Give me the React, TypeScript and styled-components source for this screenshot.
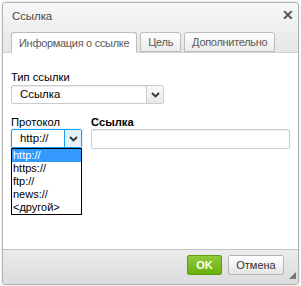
import React from "react";
import styled, { createGlobalStyle } from "styled-components";

const GlobalStyle = createGlobalStyle`
  html, body {
    margin: 0;
    padding: 0;
    background: #ffffff;
    font-family: "Liberation Sans", Arial, sans-serif;
    font-size: 11.2px;
    color: #333;
  }
`;

const Dialog = styled.div`
  position: relative;
  box-sizing: border-box;
  margin: 2px;
  width: 297px;
  height: 283px;
  border: 1px solid #b2b2b2;
  border-radius: 3px;
  background: linear-gradient(#f8f8f8, #e4e4e4 52px);
  box-shadow: 0 0 3px rgba(0, 0, 0, 0.15);
  display: flex;
  flex-direction: column;
  overflow: hidden;
`;

const TitleBar = styled.div`
  height: 25px;
  display: flex;
  align-items: center;
  justify-content: space-between;
  padding: 0 4px 0 9px;
  font-size: 11.5px;
  letter-spacing: -0.1px;
  color: #474747;
  text-shadow: 0 1px 0 rgba(255, 255, 255, 0.75);
`;

const Close = styled.span`
  font-size: 14px;
  font-weight: bold;
  color: #555;
  line-height: 1;
  margin-top: -2px;
`;

const TabStrip = styled.div`
  display: flex;
  align-items: flex-end;
  gap: 3px;
  padding-left: 8px;
  height: 24px;
  border-bottom: 1px solid #d1d1d1;
`;

const Tab = styled.div<{ $active?: boolean }>`
  box-sizing: border-box;
  flex: none;
  white-space: nowrap;
  height: ${p => (p.$active ? "21px" : "20px")};
  margin-bottom: ${p => (p.$active ? "-1px" : "0")};
  padding: 0 7px;
  display: flex;
  align-items: center;
  border: 1px solid #bcbcbc;
  border-bottom-color: ${p => (p.$active ? "#fff" : "#bcbcbc")};
  border-radius: 3px 3px 0 0;
  background: ${p => (p.$active ? "#fff" : "linear-gradient(#fefefe, #ebebeb)")};
  color: #595959;
  font-size: 11px;
  letter-spacing: -0.3px;
`;

const Content = styled.div`
  flex: 1;
  background: #fff;
  padding: 17px 7px 0 8px;
  position: relative;
`;

const Label = styled.div<{ $bold?: boolean }>`
  line-height: 14px;
  margin-bottom: 1px;
  color: #000;
  font-weight: ${p => (p.$bold ? "bold" : "normal")};
`;

const Row = styled.div`
  display: flex;
  gap: 9px;
  margin-top: 11px;
  ${Label} {
    margin-bottom: 0;
  }
`;

const Field = styled.div<{ $grow?: boolean }>`
  position: relative;
  flex: ${p => (p.$grow ? "1" : "none")};
`;

const Select = styled.div<{ $w: number; $focus?: boolean }>`
  box-sizing: border-box;
  width: ${p => p.$w}px;
  height: 19px;
  display: flex;
  border: 1px solid ${p => (p.$focus ? "#139ff7" : "#c9cccf")};
  border-radius: 2px;
  background: #fff;
  box-shadow: ${p => (p.$focus ? "0 0 2px #a8d5f7" : "inset 0 1px 1px rgba(0,0,0,0.08)")};
`;

const SelectText = styled.div`
  flex: 1;
  padding-left: 8px;
  line-height: 17px;
  color: #000;
  font-size: 11.4px;
`;

const Arrow = styled.div<{ $focus?: boolean }>`
  width: 16px;
  display: flex;
  align-items: center;
  justify-content: center;
  border-left: 1px solid ${p => (p.$focus ? "#139ff7" : "#c9cccf")};
  background: ${p => (p.$focus ? "#e4f1fb" : "linear-gradient(#fafafa, #e8e8e8)")};
`;

const Input = styled.div`
  box-sizing: border-box;
  height: 20px;
  margin-right: 1px;
  border: 1px solid #c9cccf;
  border-radius: 2px;
  box-shadow: inset 0 1px 1px rgba(0, 0, 0, 0.08);
`;

const List = styled.div`
  position: absolute;
  left: 0;
  top: 33px;
  box-sizing: border-box;
  width: 71px;
  border: 1px solid #000;
  background: #fff;
  z-index: 2;
`;

const Option = styled.div<{ $sel?: boolean }>`
  height: 13px;
  line-height: 13px;
  font-size: 11px;
  padding-left: 1px;
  color: ${p => (p.$sel ? "#fff" : "#000")};
  background: ${p => (p.$sel ? "#3399ff" : "transparent")};
`;

const Footer = styled.div`
  height: 29px;
  border-top: 1px solid #c2c2c2;
  background: linear-gradient(#ebebeb, #dcdcdc);
  display: flex;
  justify-content: flex-end;
  align-items: flex-start;
  gap: 6px;
  padding: 5px 14px 0 0;
  position: relative;
`;

const Button = styled.div<{ $ok?: boolean }>`
  box-sizing: border-box;
  height: 20px;
  width: ${p => (p.$ok ? "35px" : "56px")};
  display: flex;
  align-items: center;
  justify-content: center;
  border-radius: 2px;
  border: 1px solid ${p => (p.$ok ? "#5ba00e" : "#b6b6b6")};
  background: ${p => (p.$ok ? "linear-gradient(#8dca3a, #69b10b)" : "linear-gradient(#fff, #e4e4e4)")};
  color: ${p => (p.$ok ? "#fff" : "#333")};
  font-weight: ${p => (p.$ok ? "bold" : "normal")};
  font-size: 11px;
`;

const Grip = styled.div`
  position: absolute;
  right: 2px;
  bottom: 5px;
  width: 0;
  height: 0;
  border-left: 7px solid transparent;
  border-bottom: 7px solid #777;
`;

const Chevron = () => (
  <svg width="9" height="6" viewBox="0 0 9 6">
    <path d="M1 1 L4.5 4.5 L8 1" fill="none" stroke="#333" strokeWidth="1.8" />
  </svg>
);

const protocols = ["http://", "https://", "ftp://", "news://", "<другой>"];

export default function App() {
  return (
    <>
      <GlobalStyle />
      <Dialog>
        <TitleBar>
          <span>Ссылка</span>
          <Close>✕</Close>
        </TitleBar>
        <TabStrip>
          <Tab $active>Информация о ссылке</Tab>
          <Tab>Цель</Tab>
          <Tab>Дополнительно</Tab>
        </TabStrip>
        <Content>
          <Label>Тип ссылки</Label>
          <Select $w={153}>
            <SelectText>Ссылка</SelectText>
            <Arrow>
              <Chevron />
            </Arrow>
          </Select>
          <Row>
            <Field>
              <Label>Протокол</Label>
              <Select $w={71} $focus>
                <SelectText>http://</SelectText>
                <Arrow $focus>
                  <Chevron />
                </Arrow>
              </Select>
              <List>
                {protocols.map((p, i) => (
                  <Option key={p} $sel={i === 0}>
                    {p}
                  </Option>
                ))}
              </List>
            </Field>
            <Field $grow>
              <Label $bold>Ссылка</Label>
              <Input />
            </Field>
          </Row>
        </Content>
        <Footer>
          <Button $ok>OK</Button>
          <Button>Отмена</Button>
          <Grip />
        </Footer>
      </Dialog>
    </>
  );
}
